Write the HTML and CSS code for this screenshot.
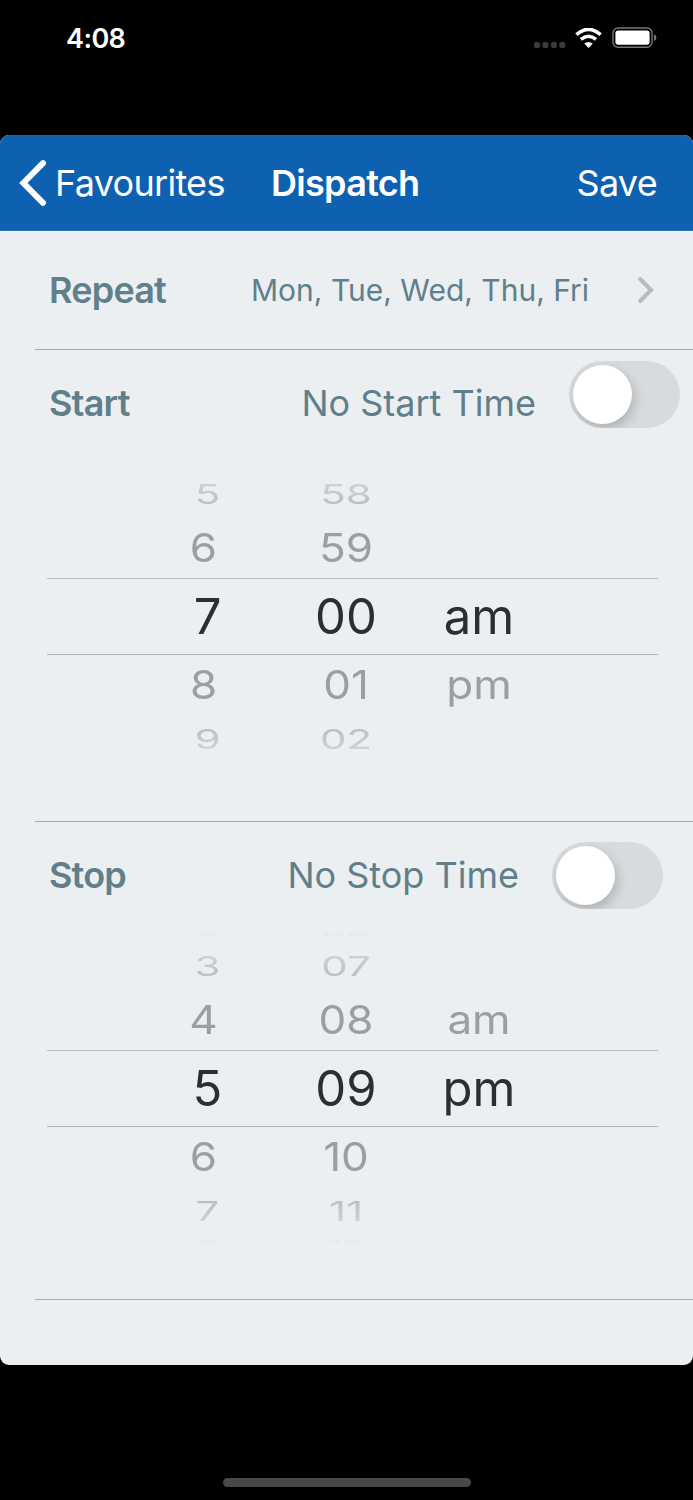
FILE: index.html
```html
<!DOCTYPE html>
<html lang="en">
<head>
  <meta charset="UTF-8">
  <meta name="viewport" content="width=device-width, initial-scale=1.0">
  <title>Dispatch</title>
  <link rel="stylesheet" href="styles.css">
</head>
<body>
  <div class="status-bar">
    <span class="clock">4:08</span>
    <div class="status-icons">
      <svg class="signal" width="32" height="6" viewBox="0 0 32 6" fill="#3b3b3b">
        <rect x="0" y="0" width="6" height="6" rx="2"/>
        <rect x="8.4" y="0" width="6" height="6" rx="2"/>
        <rect x="16.9" y="0" width="6" height="6" rx="2"/>
        <rect x="25.3" y="0" width="6" height="6" rx="2"/>
      </svg>
      <svg class="wifi" width="27" height="21" viewBox="0 0 27 21" fill="none" stroke="#fff">
        <path d="M1.4 6.6Q13.5-3.8 25.6 6.6" stroke-width="3.6"/>
        <path d="M5.9 11.4Q13.5 5.2 21.1 11.4" stroke-width="3.5"/>
        <path d="M9.2 15.6Q13.5 12.2 17.8 15.6L13.5 20Z" fill="#fff" stroke="none"/>
      </svg>
      <svg class="battery" width="45" height="22" viewBox="0 0 45 22">
        <rect x="1" y="1" width="39" height="19.2" rx="5" fill="none" stroke="#777" stroke-width="1.4"/>
        <rect x="3.4" y="3.4" width="34.2" height="14.4" rx="2.8" fill="#fff"/>
        <path d="M42 7.2Q44.4 8.2 44.4 10.6T42 14Z" fill="#777"/>
      </svg>
    </div>
  </div>

  <div class="screen">
    <header class="navbar">
      <a class="back">
        <svg width="28" height="48" viewBox="0 0 28 48" fill="none" stroke="#fff" stroke-width="6" stroke-linecap="round">
          <path d="M24 4.2L4.4 24L24 43.8" stroke-linejoin="miter"/>
        </svg>
        <span>Favourites</span>
      </a>
      <h1 class="title">Dispatch</h1>
      <a class="save">Save</a>
    </header>

    <section class="repeat">
      <span class="label repeat-label">Repeat</span>
      <span class="days">Mon, Tue, Wed, Thu, Fri</span>
      <svg class="chevron" width="18" height="28" viewBox="0 0 18 28" fill="none" stroke="#b8bbbe" stroke-width="4" stroke-linecap="round">
        <path d="M3.2 3L14 14L3.2 25"/>
      </svg>
    </section>

    <section class="start">
      <div class="time-row">
        <span class="label start-label">Start</span>
        <span class="value">No Start Time</span>
        <div class="switch"><div class="knob"></div></div>
      </div>
      <div class="picker">
        <div class="row edge"></div>
        <div class="row far top"><span>5</span><span>58</span></div>
        <div class="row near"><span>6</span><span>59</span></div>
        <div class="row selected"><span>7</span><span>00</span><span>am</span></div>
        <div class="row near"><span>8</span><span>01</span><span>pm</span></div>
        <div class="row far bottom"><span>9</span><span>02</span></div>
      </div>
    </section>

    <section class="stop">
      <div class="time-row">
        <span class="label stop-label">Stop</span>
        <span class="value">No Stop Time</span>
        <div class="switch"><div class="knob"></div></div>
      </div>
      <div class="picker">
        <div class="row edge"><span>2</span><span>06</span></div>
        <div class="row far top"><span>3</span><span>07</span></div>
        <div class="row near"><span>4</span><span>08</span><span>am</span></div>
        <div class="row selected"><span>5</span><span>09</span><span>pm</span></div>
        <div class="row near"><span>6</span><span>10</span></div>
        <div class="row far bottom"><span>7</span><span>11</span></div>
        <div class="row edge"><span>8</span><span>12</span></div>
      </div>
    </section>
  </div>

  <div class="home-indicator"></div>
</body>
</html>
```
FILE: styles.css
```css
* {
  margin: 0;
  padding: 0;
  box-sizing: border-box;
}

body {
  font-family: Inter, "Liberation Sans", sans-serif;
  background-color: #000;
  height: 1500px;
  overflow: hidden;
}

/* status bar */
.status-bar {
  display: flex;
  justify-content: space-between;
  height: 135px;
  padding: 23px 36px 0 66px;
}

.clock {
  font-size: 27px;
  font-weight: 600;
  line-height: 31px;
  letter-spacing: -0.6px;
  color: #fff;
}

.status-icons {
  display: flex;
  height: 32px;
}

.signal {
  margin: 19px 9px 0 0;
}

.wifi {
  margin: 5px 10px 0 0;
}

.battery {
  margin-top: 4px;
}

/* card */
.screen {
  height: 1230px;
  background-color: #ebeff2;
  border-radius: 9px;
  overflow: hidden;
  color: #607f8b;
}

.navbar {
  display: flex;
  align-items: center;
  height: 96px;
  padding: 0 36px 0 19px;
  background-color: #0e61b0;
  border-bottom: 1px solid #2f75b6;
  color: #fff;
  font-size: 36px;
}

.back {
  display: flex;
  align-items: center;
  width: 252px;
  gap: 8px;
  letter-spacing: -0.7px;
}

.title {
  font-size: 36px;
  font-weight: 600;
  letter-spacing: -0.7px;
}

.save {
  margin-left: auto;
  letter-spacing: -0.7px;
}

.label {
  font-size: 36px;
  font-weight: 600;
  letter-spacing: -0.8px;
}

.repeat {
  display: flex;
  align-items: center;
  height: 119px;
  margin-left: 35px;
  padding: 0 38px 0 14px;
  border-bottom: 1px solid #a5abad;
}

.repeat-label {
  width: 202px;
}

.days {
  font-size: 30px;
}

.chevron {
  margin-left: auto;
}

.start,
.stop {
  margin-left: 35px;
  border-bottom: 1px solid #a5abad;
}

.start {
  height: 472px;
}

.stop {
  height: 478px;
}

.time-row {
  display: flex;
  align-items: center;
  height: 106px;
  padding-left: 14px;
}

.start .time-row {
  padding-right: 13px;
}

.stop .time-row {
  padding-right: 30px;
}

.value {
  margin-left: auto;
  font-size: 36px;
}

.switch {
  width: 111px;
  height: 67px;
  margin-left: 33px;
  padding: 4px;
  border-radius: 34px;
  background-color: #d8dbde;
  overflow: hidden;
}

.start .switch {
  margin-bottom: 18px;
}

.knob {
  width: 59px;
  height: 59px;
  border-radius: 50%;
  background-color: #fff;
  box-shadow: 2px 5px 12px rgba(0, 0, 0, 0.2);
}

/* wheel picker, rows get flatter away from the middle */
.picker {
  width: 611px;
  margin-left: 12px;
}

.row {
  display: grid;
  grid-template-columns: 139px 138px 128px;
  align-items: center;
  justify-items: center;
  padding-left: 91px;
  white-space: nowrap;
}

.selected {
  height: 77px;
  border-top: 1px solid #b7bbbd;
  border-bottom: 1px solid #b2b6b8;
  color: #2d2f2f;
  font-size: 49px;
}

.near {
  height: 60px;
  color: #9c9ea0;
  font-size: 44px;
}

.near span {
  transform: scaleY(0.9);
}

.near span:first-child {
  margin-right: 8px;
}

.far {
  height: 48px;
  color: #bcbfc1;
  font-size: 42px;
  line-height: 48px;
}

.far span {
  transform: scaleY(0.64);
}

.far.top {
  mask-image: linear-gradient(to top, #000 30%, rgba(0, 0, 0, 0.35));
}

.far.bottom {
  mask-image: linear-gradient(to bottom, #000 30%, rgba(0, 0, 0, 0.35));
}

.edge {
  height: 14px;
  font-size: 40px;
  line-height: 14px;
  color: #e3e7e9;
}

.edge span {
  transform: scaleY(0.1);
}

/* home indicator */
.home-indicator {
  width: 248px;
  height: 9px;
  margin: 113px auto 0;
  border-radius: 5px;
  background-color: #484848;
}
```
